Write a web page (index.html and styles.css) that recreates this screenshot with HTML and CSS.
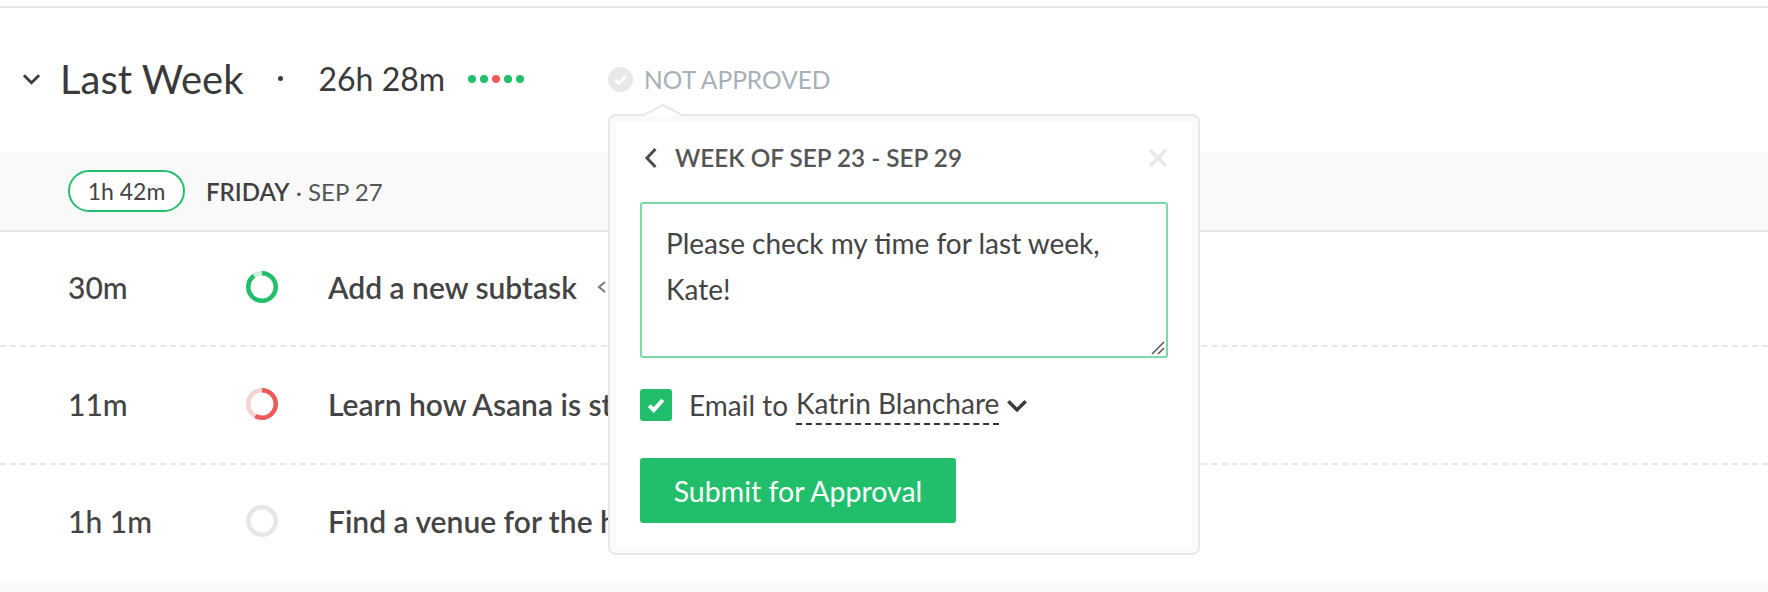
FILE: index.html
```html
<!DOCTYPE html>
<html lang="en">
<head>
<meta charset="utf-8">
<title>Last Week</title>
<link rel="stylesheet" href="styles.css">
</head>
<body>
<main class="page">
  <div class="top-rule"></div>
  <header class="week-head">
    <svg class="week-chevron" viewBox="0 0 20 12"><path d="M2 2l8 8 8-8"/></svg>
    <h1 class="week-title">Last Week</h1>
    <span class="week-sep"></span>
    <span class="week-total">26h 28m</span>
    <span class="dots">
      <i class="dot"></i><i class="dot"></i><i class="dot dot-red"></i><i class="dot"></i><i class="dot"></i>
    </span>
    <span class="status">
      <svg class="status-icon" viewBox="0 0 24 24"><circle cx="12" cy="12" r="12"/><path d="M7 12.500l3.500 3.200 6.500-7"/></svg>
      NOT APPROVED
    </span>
  </header>

  <section class="day-band">
    <span class="pill">1h 42m</span>
    <span class="day-label"><b>FRIDAY</b> · SEP 27</span>
  </section>

  <section class="rows">
    <div class="row">
      <span class="row-time">30m</span>
      <svg class="ring" viewBox="0 0 32 32">
        <circle class="ring-track-green" cx="16" cy="16" r="13.750"/>
        <circle class="ring-green" cx="16" cy="16" r="13.750" pathLength="100" stroke-dasharray="90 10" transform="rotate(-90 16 16)"/>
      </svg>
      <span class="row-name">Add a new subtask</span>
      <svg class="row-more" viewBox="0 0 10 14"><path d="M8 2L2 7l6 5"/></svg>
    </div>
    <div class="row row-mid">
      <span class="row-time">11m</span>
      <svg class="ring" viewBox="0 0 32 32">
        <circle class="ring-track-red" cx="16" cy="16" r="13.750"/>
        <circle class="ring-red" cx="16" cy="16" r="13.750" pathLength="100" stroke-dasharray="58 42" transform="rotate(-90 16 16)"/>
      </svg>
      <span class="row-name">Learn how Asana is st</span>
    </div>
    <div class="row row-last">
      <span class="row-time">1h 1m</span>
      <svg class="ring" viewBox="0 0 32 32">
        <circle class="ring-empty" cx="16" cy="16" r="13.750"/>
      </svg>
      <span class="row-name">Find a venue for the h</span>
    </div>
  </section>
  <div class="bottom-band"></div>

  <aside class="popover">
    <svg class="popover-arrow" viewBox="0 0 40 12"><path class="arrow-fill" d="M0 12L20 1l20 11z"/><path class="arrow-line" d="M0 11.500L20 1l20 10.500"/></svg>
    <div class="popover-head">
      <svg class="back" viewBox="0 0 14 22"><path d="M11.500 2L3 11l8.500 9"/></svg>
      <span class="popover-title">WEEK OF SEP 23 - SEP 29</span>
      <svg class="close" viewBox="0 0 20 20"><path d="M2 2l16 16M18 2L2 18"/></svg>
    </div>
    <div class="note">
      Please check my time for last week, Kate!
      <svg class="grip" viewBox="0 0 14 14"><path d="M1 13L13 1M7 13l6-6"/></svg>
    </div>
    <div class="email">
      <span class="check"><svg viewBox="0 0 16 14"><path d="M2 7.500l4 4 8-9"/></svg></span>
      <span class="email-to">Email to</span>
      <span class="email-name">Katrin Blanchare</span>
      <svg class="email-chevron" viewBox="0 0 20 12"><path d="M2 2l8 8 8-8"/></svg>
    </div>
    <button class="submit" type="button">Submit for Approval</button>
  </aside>
</main>
</body>
</html>
```

FILE: styles.css
```css
* { box-sizing: border-box; }
html, body { margin: 0; padding: 0; }
body {
  width: 1768px;
  height: 592px;
  overflow: hidden;
  background: #fff;
  font-family: Lato, "Open Sans", sans-serif;
  color: #444;
}
.page { position: relative; height: 592px; }
.top-rule { height: 2px; margin-top: 6px; background: #e8e8e8; }
.week-head {
  display: flex;
  align-items: center;
  height: 144px;
  padding: 0 0 3px 22px;
}
.week-chevron { width: 19px; height: 12px; fill: none; stroke: #3c3c3c; stroke-width: 3; }
.week-title { margin: 0 0 0 19px; font-size: 40px; font-weight: 400; color: #3a3a3a; }
.week-sep { width: 5px; height: 5px; margin-left: 34px; border-radius: 50%; background: #3a3a3a; }
.week-total { margin-left: 36px; font-size: 32px; color: #3a3a3a; }
.dots { display: flex; gap: 4px; margin-left: 23px; }
.dot { width: 8px; height: 8px; border-radius: 50%; background: #21bf6b; }
.dot-red { background: #ef5a5a; }
.status { display: flex; align-items: center; gap: 11px; margin-left: 84px; padding-top: 2px; font-size: 24.500px; color: #a7b0b8; }
.status-icon { width: 25px; height: 25px; }
.status-icon circle { fill: #e8e8e8; }
.status-icon path { fill: none; stroke: #fff; stroke-width: 3; }
.day-band {
  display: flex;
  align-items: center;
  gap: 21px;
  height: 80px;
  padding-left: 68px;
  background: #f9f9f9;
  border-bottom: 2px solid #e6e6e6;
}
.pill {
  display: flex;
  align-items: center;
  justify-content: center;
  width: 117px;
  height: 42px;
  border: 2px solid #21bf6b;
  border-radius: 21px;
  background: #fff;
  font-size: 23px;
  color: #444;
}
.day-label { font-size: 24px; color: #555; }
.day-label b { font-weight: 600; color: #3f3f3f; }
.rows { display: flex; flex-direction: column; }
.row {
  display: flex;
  align-items: center;
  height: 115px;
  padding: 0 0 4px 68px;
  border-bottom: 2px dashed #e6e6e6;
  white-space: nowrap;
}
.row-mid { height: 118px; padding-bottom: 3px; }
.row-last { height: 116px; border-bottom: 0; }
.row-time { width: 178px; font-size: 30px; font-weight: 500; color: #444; }
.ring { width: 32px; height: 32px; fill: none; stroke-width: 4.500; }
.ring-track-green { stroke: #c8eed9; }
.ring-green { stroke: #21bf6b; }
.ring-track-red { stroke: #f6d2d2; }
.ring-red { stroke: #ef5a5a; }
.ring-empty { stroke: #e6e6e6; }
.row-name { margin-left: 50px; font-size: 30px; font-weight: 600; color: #444; }
.row-more { width: 10px; height: 14px; margin-left: 20px; fill: none; stroke: #777; stroke-width: 2; }
.bottom-band { height: 11px; background: #f9f9f9; }
.popover {
  position: absolute;
  left: 608px;
  top: 108px;
  width: 592px;
  height: 441px;
  padding: 0 30px;
  background: #fff;
  border: 2px solid #e8e8e8;
  border-radius: 8px;
  box-shadow: inset 0 0 0 6px #fafafa;
}
.popover-arrow { position: absolute; left: 33px; top: -12px; width: 40px; height: 12px; }
.arrow-fill { fill: #fff; }
.arrow-line { fill: none; stroke: #e8e8e8; stroke-width: 2; }
.popover-head { display: flex; align-items: center; height: 86px; padding: 0 0 3px 4px; }
.back { width: 14px; height: 22px; fill: none; stroke: #4c4c4c; stroke-width: 3; }
.popover-title { margin-left: 17px; font-size: 24.300px; font-weight: 600; color: #555; }
.close { width: 20px; height: 20px; margin-left: auto; fill: none; stroke: #e8e8e8; stroke-width: 3.500; }
.note {
  position: relative;
  width: 528px;
  height: 156px;
  padding: 16px 24px;
  border: 2px solid #7fd8a8;
  border-radius: 3px;
  font-size: 28px;
  line-height: 46px;
  color: #444;
}
.grip { position: absolute; right: 1px; bottom: 1px; width: 14px; height: 14px; fill: none; stroke: #555; stroke-width: 1.500; }
.email { display: flex; align-items: center; margin-top: 29px; height: 36px; font-size: 28px; color: #444; }
.check {
  display: flex;
  align-items: center;
  justify-content: center;
  width: 32px;
  height: 32px;
  border-radius: 3px;
  background: #21bf6b;
}
.check svg { width: 18px; height: 16px; fill: none; stroke: #fff; stroke-width: 3.500; }
.email-to { margin-left: 17px; }
.email-name { margin-left: 8px; padding-bottom: 3px; border-bottom: 2px dashed #333; }
.email-chevron { width: 22px; height: 13px; margin-left: 7px; fill: none; stroke: #3c3c3c; stroke-width: 3.200; }
.submit {
  display: block;
  width: 316px;
  height: 65px;
  margin-top: 35px;
  border: 0;
  border-radius: 3px;
  background: #21bf6b;
  color: #fff;
  font-family: inherit;
  font-size: 28.500px;
}
```
